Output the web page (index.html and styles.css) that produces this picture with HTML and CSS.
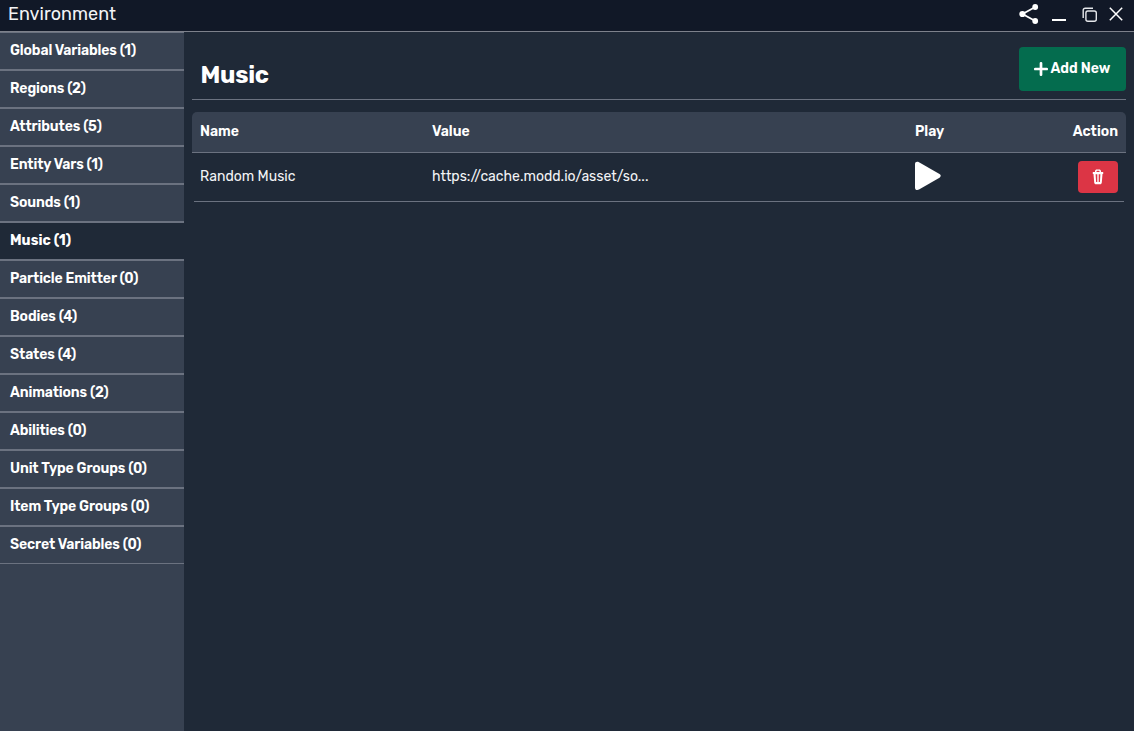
FILE: index.html
```html
<!DOCTYPE html>
<html lang="en">
<head>
<meta charset="utf-8">
<title>Environment</title>
<link rel="stylesheet" href="styles.css">
</head>
<body>
<div class="window">
  <header class="titlebar">
    <span class="titlebar-text">Environment</span>
    <div class="controls">
      <svg class="share" viewBox="0 0 20 20"><path d="M16.3 3 3.5 10l12.8 7" fill="none" stroke="#fff" stroke-width="1.8"/><circle cx="16.2" cy="3" r="2.9"/><circle cx="3.4" cy="10" r="3.1"/><circle cx="16.2" cy="17" r="2.9"/></svg>
      <span class="minimize"></span>
      <svg class="copy" viewBox="0 0 16 16"><rect x="3.9" y="4" width="10.4" height="10.3" rx="2"/><path d="M1.2 11V3.2a2 2 0 0 1 2-2H11"/></svg>
      <svg class="close" viewBox="0 0 14 14"><path d="M.8.8l12.4 12.4M13.2.8.8 13.2"/></svg>
    </div>
  </header>
  <div class="body">
    <nav class="sidebar">
      <a class="item">Global Variables (1)</a>
      <a class="item">Regions (2)</a>
      <a class="item">Attributes (5)</a>
      <a class="item">Entity Vars (1)</a>
      <a class="item">Sounds (1)</a>
      <a class="item active">Music (1)</a>
      <a class="item">Particle Emitter (0)</a>
      <a class="item">Bodies (4)</a>
      <a class="item">States (4)</a>
      <a class="item">Animations (2)</a>
      <a class="item">Abilities (0)</a>
      <a class="item">Unit Type Groups (0)</a>
      <a class="item">Item Type Groups (0)</a>
      <a class="item">Secret Variables (0)</a>
    </nav>
    <main class="content">
      <div class="heading">
        <h1>Music</h1>
        <button class="add"><svg class="plus" viewBox="0 0 13 13"><path d="M6.5 1.2v10.6M1.2 6.5h10.6"/></svg><span>Add New</span></button>
      </div>
      <div class="row head">
        <span>Name</span><span>Value</span><span>Play</span><span class="last">Action</span>
      </div>
      <div class="row entry">
        <span>Random Music</span>
        <span class="url">https://cache.modd.io/asset/so...</span>
        <svg class="play" viewBox="0 0 26 30"><path d="M0 3C0 .8 2 .2 4 1.2l20.5 11.7c1.6 1 1.6 2.8 0 3.8L4 28.6C2 29.6 0 29 0 26.8z"/></svg>
        <button class="delete"><svg class="trash" viewBox="0 0 12 16"><path fill-rule="evenodd" d="M3 3V2.2C3 .9 3.9.4 4.8.4h2.4C8.1.4 9 .9 9 2.2V3h2.2v1.9h-.7l-.7 8.5c-.1 1.1-.8 1.8-1.8 1.8H4c-1 0-1.7-.7-1.8-1.8l-.7-8.5H.8V3zm1.5 0h3V2.3c0-.3-.2-.5-.5-.5H5c-.3 0-.5.2-.5.5zM3.6 5.2l.5 7.8h1.2V5.2zm3.1 0V13h1.2l.5-7.8z"/></svg></button>
      </div>
    </main>
  </div>
</div>
</body>
</html>
```
FILE: styles.css
```css
* { box-sizing: border-box; }
body { margin: 0; background: #1f2937; color: #fff; font: 500 14px/20px Rubik, Roboto, sans-serif; }
.window { height: 731px; display: flex; flex-direction: column; overflow: hidden; }
.titlebar { height: 32px; flex: none; display: flex; justify-content: space-between; background: #111827; border-bottom: 1px solid #7d818b; padding: 0 11px 0 8px; }
.titlebar-text { font-size: 18px; line-height: 28px; font-weight: 400; letter-spacing: .03px; color: #f3f4f6; }
.controls { display: flex; align-items: flex-start; }
.share { width: 20px; height: 20px; margin-top: 4px; fill: #fff; }
.minimize { width: 14px; height: 2px; background: #fff; margin: 19px 16px 0 13px; }
.copy { width: 16px; height: 16px; margin: 6.5px 11px 0 0; fill: none; stroke: #e5e7eb; stroke-width: 1.4; }
.close { width: 14px; height: 14px; margin-top: 7px; stroke: #fff; stroke-width: 1.5; }
.body { flex: 1; display: flex; min-height: 0; }
.sidebar { width: 184px; flex: none; background: #374151; }
.item { display: block; height: 38px; padding: 8px 10px; border: solid #6b7280; border-width: 1px 0; font-weight: 600; letter-spacing: -.13px; }
.active { background: #1f2937; font-weight: 700; letter-spacing: .03px; }
.content { flex: 1; padding: 0 8px; }
.heading { height: 68px; display: flex; justify-content: space-between; border-bottom: 1px solid #6b7280; margin-bottom: 12px; padding: 15px 0 0 8.5px; }
h1 { margin: 12px 0 0; font-size: 24px; line-height: 32px; font-weight: 700; letter-spacing: -.3px; }
button { border: 0; border-radius: 4px; color: #fff; font: inherit; padding: 0; display: flex; align-items: center; justify-content: center; }
.add { width: 107px; height: 44px; background: #046c4e; font-weight: 600; gap: 3px; padding-right: 1px; }
.plus { width: 14px; height: 14px; stroke: #fff; stroke-width: 2.5; stroke-linecap: round; }
.row { display: grid; grid-template-columns: 232px 483px 1fr auto; }
.head { height: 41px; padding: 10px 8px 0; background: #374151; border-bottom: 1px solid #6b7280; border-radius: 5px 5px 0 0; font-weight: 600; }
.entry { height: 49px; margin: 0 2px; padding: 8px 6px 0; border-bottom: 1px solid #6b7280; font-weight: 400; color: #f3f4f6; }
.entry > span { line-height: 32px; }
.play { width: 26px; height: 30px; fill: #fff; }
.delete { width: 40px; height: 32px; background: #dc3545; }
.trash { width: 12px; height: 16px; fill: #fff; }
```
